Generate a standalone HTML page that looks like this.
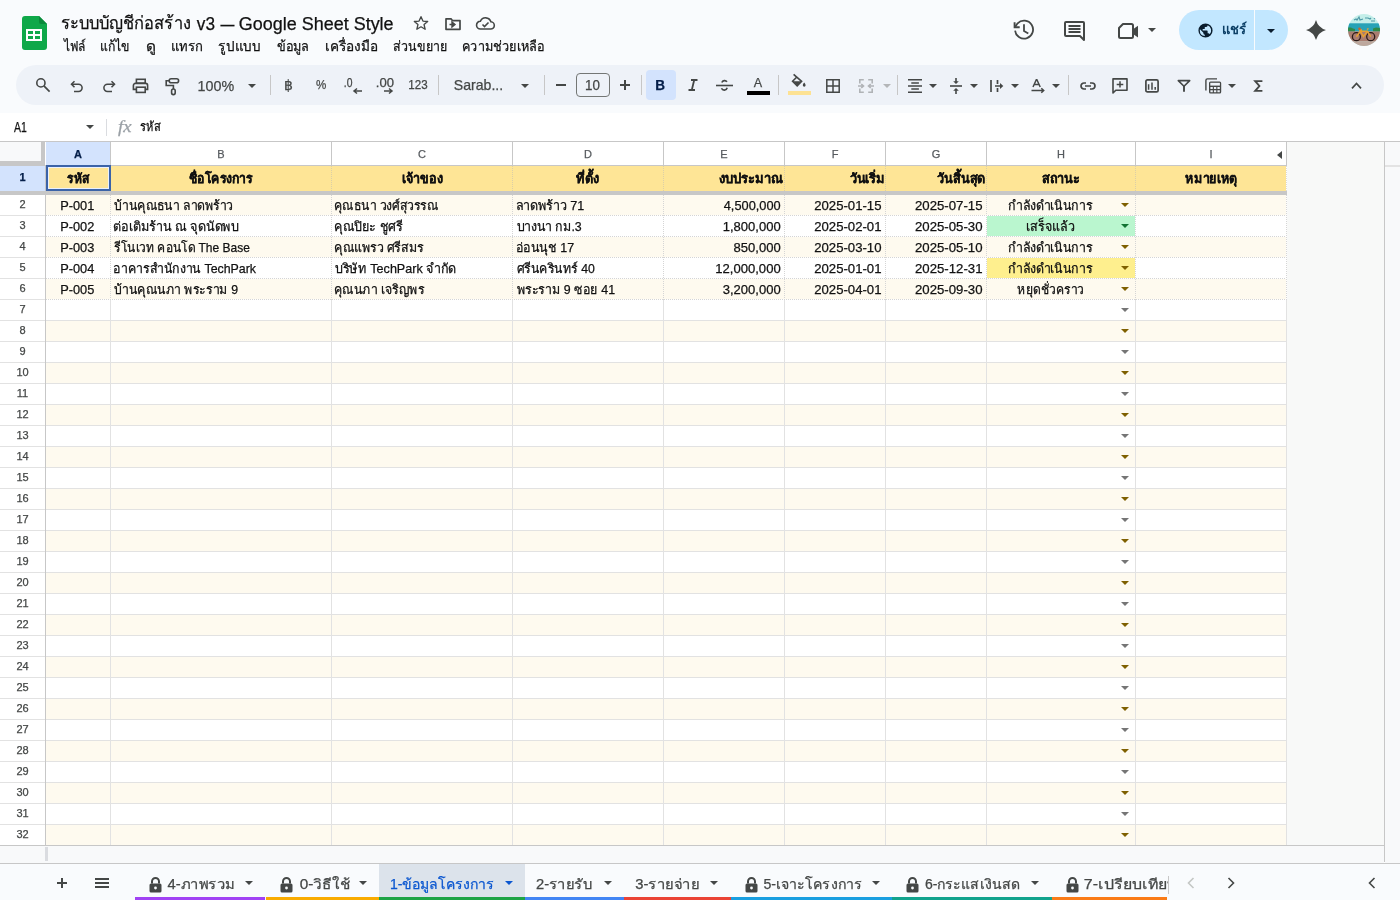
<!DOCTYPE html><html><head><meta charset="utf-8"><style>
*{box-sizing:border-box;margin:0;padding:0}
html,body{width:1400px;height:900px;overflow:hidden;background:#f9fbfd;font-family:"Liberation Sans", sans-serif;color:#111}
.a{position:absolute}
.t{position:absolute;white-space:nowrap;line-height:1;-webkit-text-stroke:0.25px currentColor}
#root{position:absolute;left:0;top:0;width:1400px;height:900px;will-change:transform}
svg{position:absolute;overflow:visible}
</style></head><body><div id="root"><svg style="left:22px;top:16px" width="25" height="34" viewBox="0 0 25 34"><path d="M3 0h14l8 8v23a3 3 0 0 1-3 3H3a3 3 0 0 1-3-3V3a3 3 0 0 1 3-3z" fill="#0fa849"/><path d="M17 0l8 8h-6a2 2 0 0 1-2-2z" fill="#0a8a3a"/><path d="M4 13h16v12H4z" fill="#fff"/><path d="M6 15h5v3H6zM13 15h5v3h-5zM6 20h5v3H6zM13 20h5v3h-5z" fill="#0fa849"/></svg><div class="t" style="left:61px;top:14px;font-size:18px;transform-origin:1.00px 50%;transform:translateX(-0.25px) scaleX(0.9161);" id="t1"><span>ระบบบัญชีก่อสร้าง</span></div><div class="t" style="left:196px;top:15px;font-size:18px;transform-origin:0.00px 50%;transform:translateX(0.80px) scaleX(0.9556);" id="t2"><span>v3</span></div><div class="t" style="left:220px;top:15px;font-size:18px;transform-origin:0.00px 50%;transform:translateX(0.50px) scaleX(0.7722);" id="t3"><span>—</span></div><div class="t" style="left:239px;top:15px;font-size:18px;transform-origin:1.00px 50%;transform:translateX(-0.20px) scaleX(0.9980);" id="t4"><span>Google Sheet Style</span></div><svg style="left:413px;top:15px" width="16" height="16" viewBox="0 0 24 24"><path d="M12 2.5l2.9 6.6 7.1.6-5.4 4.7 1.6 7-6.2-3.7-6.2 3.7 1.6-7L2 9.7l7.1-.6z" fill="none" stroke="#444746" stroke-width="2" stroke-linejoin="round"/></svg><svg style="left:445px;top:17px" width="16" height="14" viewBox="0 0 16 14"><path d="M1 2.2V12.3h14V3.6H7.4L6 1.8H1z" fill="none" stroke="#444746" stroke-width="1.7" stroke-linejoin="round"/><path d="M4.5 7.5h4M7 5l3 2.5L7 10z" fill="#444746" stroke="#444746" stroke-width="1.4"/></svg><svg style="left:476px;top:17px" width="19" height="13" viewBox="0 0 19 13"><path d="M4.5 12H14.5a3.6 3.6 0 0 0 .4-7.2A5.6 5.6 0 0 0 4.4 4.2 3.9 3.9 0 0 0 4.5 12z" fill="none" stroke="#444746" stroke-width="1.6"/><path d="M6.5 7.5l2 2 4-4" fill="none" stroke="#444746" stroke-width="1.6"/></svg><div class="t" style="left:62px;top:39px;font-size:14px;transform-origin:-1.00px 50%;transform:translateX(1.70px) scaleX(0.8538);" id="t5"><span>ไฟล์</span></div><div class="t" style="left:101px;top:39px;font-size:14px;transform-origin:1.00px 50%;transform:translateX(-0.70px) scaleX(0.8750);" id="t6"><span>แก้ไข</span></div><div class="t" style="left:146px;top:39px;font-size:14px;transform-origin:1.00px 50%;transform:translateX(-0.10px) scaleX(1.1000);" id="t7"><span>ดู</span></div><div class="t" style="left:171px;top:39px;font-size:14px;transform-origin:1.00px 50%;transform:translateX(-0.30px) scaleX(0.9333);" id="t8"><span>แทรก</span></div><div class="t" style="left:219px;top:39px;font-size:14px;transform-origin:1.00px 50%;transform:translateX(-0.70px) scaleX(0.9643);" id="t9"><span>รูปแบบ</span></div><div class="t" style="left:276px;top:39px;font-size:14px;transform-origin:0.00px 50%;transform:translateX(0.80px) scaleX(0.9086);" id="t10"><span>ข้อมูล</span></div><div class="t" style="left:326px;top:39px;font-size:14px;transform-origin:1.00px 50%;transform:translateX(-1.00px) scaleX(0.9731);" id="t11"><span>เครื่องมือ</span></div><div class="t" style="left:393px;top:39px;font-size:14px;transform-origin:1.00px 50%;transform:translateX(-0.30px) scaleX(0.8864);" id="t12"><span>ส่วนขยาย</span></div><div class="t" style="left:463px;top:39px;font-size:14px;transform-origin:1.00px 50%;transform:translateX(-0.80px) scaleX(0.9045);" id="t13"><span>ความช่วยเหลือ</span></div><svg style="left:1013px;top:19px" width="22" height="22" viewBox="0 0 22 22"><path d="M2.1 11.6A9 9 0 1 0 4.6 4.3L2.2 7.7" fill="none" stroke="#444746" stroke-width="1.8"/><path d="M1.6 3.2V8.3H6.7" fill="none" stroke="#444746" stroke-width="1.9"/><path d="M11 5.3V12l4.3 2.6" fill="none" stroke="#444746" stroke-width="1.8"/></svg><svg style="left:1064px;top:21px" width="21" height="20" viewBox="0 0 21 20"><path d="M2 1h17a1 1 0 0 1 1 1v13l0 4-4-4H2a1 1 0 0 1-1-1V2a1 1 0 0 1 1-1z" fill="none" stroke="#444746" stroke-width="2" stroke-linejoin="round"/><path d="M4.5 5h12M4.5 8h12M4.5 11h12" stroke="#444746" stroke-width="1.8"/></svg><svg style="left:1118px;top:23px" width="21" height="16" viewBox="0 0 21 16"><path d="M5 1h8.5a1.5 1.5 0 0 1 1.5 1.5v11a1.5 1.5 0 0 1-1.5 1.5H2.5A1.5 1.5 0 0 1 1 13.5V5z" fill="none" stroke="#444746" stroke-width="2" stroke-linejoin="round"/><path d="M15 6.3l5-3.6v11.8l-5-3.6z" fill="#444746"/></svg><svg style="left:1148px;top:28px" width="8" height="4" viewBox="0 0 8 4"><path d="M0 0h8L4 4z" fill="#444746"/></svg><div class="a" style="left:1179px;top:10px;width:109px;height:40px;border-radius:20px;background:#c2e7ff"></div><div class="a" style="left:1254px;top:10px;width:1px;height:40px;background:#f9fbfd"></div><svg style="left:1197px;top:22px" width="17" height="17" viewBox="0 0 24 24"><path d="M12 2a10 10 0 1 0 0 20 10 10 0 0 0 0-20zm-1 17.9A8 8 0 0 1 4 12c0-.6.1-1.2.2-1.8L9 15v1a2 2 0 0 0 2 2zm6.9-2.5A2 2 0 0 0 16 16h-1v-3a1 1 0 0 0-1-1H8v-2h2a1 1 0 0 0 1-1V7h2a2 2 0 0 0 2-2v-.4a8 8 0 0 1 2.9 12.8z" fill="#0a1d2e"/></svg><div class="t" style="left:1222px;top:22px;font-size:14px;font-weight:bold;color:#0b3f66;-webkit-text-stroke:0;transform-origin:1.00px 50%;transform:translateX(-0.40px) scaleX(0.9320);" id="t14"><span>แชร์</span></div><svg style="left:1267px;top:29px" width="8" height="4" viewBox="0 0 8 4"><path d="M0 0h8L4 4z" fill="#0a1d2e"/></svg><svg style="left:1306px;top:20px" width="20" height="20" viewBox="0 0 20 20"><path d="M10 0Q12.2 7.8 20 10Q12.2 12.2 10 20Q7.8 12.2 0 10Q7.8 7.8 10 0z" fill="#444746"/></svg><svg style="left:1348px;top:14px" width="32" height="32" viewBox="0 0 32 32"><defs><clipPath id="av"><circle cx="16" cy="16" r="16"/></clipPath></defs><g clip-path="url(#av)"><rect width="32" height="32" fill="#c4eee9"/><path d="M6 6l2-1 1 1 2-3 1 3 3-1M17 4h3l2 1 1-1M23 7h4M26 5l2-2" stroke="#4f9aa8" stroke-width="1.2" fill="none"/><rect y="9.3" width="32" height="8.2" fill="#27a2b6"/><path d="M0 13.5h3l2 1 2 0.5v2.5H0zM25 14.5l3-1 4 0.5v3.5h-7z" fill="#2f8a48"/><rect y="17.4" width="32" height="10" fill="#a97c70"/><rect y="27.2" width="32" height="5" fill="#bda79d"/><circle cx="8.4" cy="22.7" r="4" fill="none" stroke="#2a1a18" stroke-width="1.3"/><circle cx="22.7" cy="22.7" r="4" fill="none" stroke="#2a1a18" stroke-width="1.3"/><path d="M8.4 22.7l4-5.5h7l3.3 5.5M12.4 17.2l3 5.5 4-5.5M11 16h3M19 15.5l1.5-1" stroke="#e8a030" stroke-width="1.5" fill="none"/><circle cx="11.5" cy="14.8" r="1.3" fill="#d0602a"/></g></svg><div class="a" style="left:16px;top:65px;width:1368px;height:40px;border-radius:20px;background:#eef2f8"></div><svg style="left:36px;top:78px" width="15" height="15" viewBox="0 0 15 15"><circle cx="4.9" cy="4.9" r="4.1" fill="none" stroke="#444746" stroke-width="1.6"/><path d="M7.9 7.9l5.7 5.7" stroke="#444746" stroke-width="1.7"/></svg><svg style="left:70px;top:80px" width="14" height="13" viewBox="0 0 14 13"><path d="M4.5 1.2L1.5 4.2l3 3" fill="none" stroke="#444746" stroke-width="1.55"/><path d="M1.7 4.2h6.8a3.6 3.6 0 0 1 0 7.2H4" fill="none" stroke="#444746" stroke-width="1.55"/></svg><svg style="left:102px;top:80px" width="14" height="13" viewBox="0 0 14 13"><path d="M9.5 1.2l3 3-3 3" fill="none" stroke="#444746" stroke-width="1.55"/><path d="M12.3 4.2H5.5a3.6 3.6 0 0 0 0 7.2H10" fill="none" stroke="#444746" stroke-width="1.55"/></svg><svg style="left:132px;top:78px" width="17" height="15" viewBox="0 0 17 15"><rect x="4.4" y="1.3" width="8.8" height="3.9" fill="none" stroke="#444746" stroke-width="1.6"/><path d="M4.4 11.4H1.4V7.4a2 2 0 0 1 2-2h10.2a2 2 0 0 1 2 2V11.4h-2.4" fill="none" stroke="#444746" stroke-width="1.6"/><rect x="4.4" y="9.2" width="8.8" height="5.2" fill="none" stroke="#444746" stroke-width="1.6"/></svg><svg style="left:164px;top:78px" width="16" height="17" viewBox="0 0 16 17"><rect x="5.2" y="0.8" width="9.4" height="4" rx="2" fill="none" stroke="#444746" stroke-width="1.6"/><path d="M5.2 2.8H2.2V7.5H9.4V11" fill="none" stroke="#444746" stroke-width="1.6"/><rect x="7.6" y="11" width="3.6" height="5.6" rx="1.8" fill="none" stroke="#444746" stroke-width="1.6"/></svg><div class="t" style="left:198px;top:79px;font-size:14.5px;color:#444746;transform-origin:1.00px 50%;transform:translateX(-0.40px) scaleX(0.9861);" id="t15"><span>100%</span></div><svg style="left:248px;top:84px" width="8" height="4" viewBox="0 0 8 4"><path d="M0 0h8L4 4z" fill="#444746"/></svg><div class="a" style="left:270px;top:75px;width:1px;height:20px;background:#c7c7c7"></div><div class="t" style="left:284px;top:78px;font-size:14px;color:#444746;" id="t16"><span>฿</span></div><div class="t" style="left:315px;top:78px;font-size:13.5px;color:#444746;transform-origin:0.00px 50%;transform:translateX(0.90px) scaleX(0.8583);" id="t17"><span>%</span></div><div class="t" style="left:344px;top:77px;font-size:12px;color:#444746;transform-origin:1.00px 50%;transform:translateX(-0.30px) scaleX(0.8636);" id="t18"><span>.0</span></div><svg style="left:353px;top:88px" width="9" height="6" viewBox="0 0 9 6"><path d="M9 3H2M4 .5L1 3l3 2.5" fill="none" stroke="#444746" stroke-width="1.5"/></svg><div class="t" style="left:376px;top:77px;font-size:12px;color:#444746;transform-origin:1.00px 50%;transform:translateX(-0.10px) scaleX(1.0867);" id="t19"><span>.00</span></div><svg style="left:384px;top:88px" width="9" height="6" viewBox="0 0 9 6"><path d="M0 3h7M5 .5L8 3 5 5.5" fill="none" stroke="#444746" stroke-width="1.5"/></svg><div class="t" style="left:409px;top:79px;font-size:12px;color:#444746;transform-origin:1.00px 50%;transform:translateX(-0.80px) scaleX(0.9667);" id="t20"><span>123</span></div><div class="a" style="left:438px;top:75px;width:1px;height:20px;background:#c7c7c7"></div><div class="t" style="left:454px;top:78px;font-size:14.5px;color:#444746;transform-origin:1.00px 50%;transform:translateX(-0.20px) scaleX(0.9714);" id="t21"><span>Sarab...</span></div><svg style="left:521px;top:84px" width="8" height="4" viewBox="0 0 8 4"><path d="M0 0h8L4 4z" fill="#444746"/></svg><div class="a" style="left:544px;top:75px;width:1px;height:20px;background:#c7c7c7"></div><div class="a" style="left:556px;top:84px;width:10px;height:2px;background:#444746"></div><div class="a" style="left:576px;top:73px;width:34px;height:24px;border:1px solid #747775;border-radius:4px"></div><div class="t" style="left:586px;top:78px;font-size:14px;color:#444746;transform-origin:1.00px 50%;transform:translateX(-1.00px) scaleX(0.9571);" id="t22"><span>10</span></div><div class="a" style="left:620px;top:84px;width:10px;height:2px;background:#444746"></div><div class="a" style="left:624px;top:80px;width:2px;height:10px;background:#444746"></div><div class="a" style="left:641px;top:75px;width:1px;height:20px;background:#c7c7c7"></div><div class="a" style="left:646px;top:70px;width:30px;height:30px;border-radius:4px;background:#d3e3fd"></div><div class="t" style="left:655px;top:78px;font-size:14px;font-weight:bold;color:#041e49;transform-origin:1.00px 50%;transform:translateX(0.30px) scaleX(0.9667);" id="t23"><span>B</span></div><svg style="left:688px;top:79px" width="10" height="12" viewBox="0 0 10 12"><path d="M3 1h6.5M.5 11H7M6.2 1L3.8 11" fill="none" stroke="#444746" stroke-width="1.8"/></svg><svg style="left:716px;top:78px" width="17" height="14" viewBox="0 0 17 14"><path d="M0 7.5h17" stroke="#444746" stroke-width="1.6"/><path d="M11 3.8A3 3 0 0 0 5.8 4.5M5.5 10.2A3 3 0 0 0 11.2 9.8" fill="none" stroke="#444746" stroke-width="1.6"/></svg><div class="t" style="left:753px;top:76px;font-size:13px;color:#444746;transform-origin:0.00px 50%;transform:translateX(0.70px) scaleX(0.9667);" id="t24"><span>A</span></div><div class="a" style="left:747px;top:91px;width:23px;height:4px;background:#000"></div><div class="a" style="left:778px;top:75px;width:1px;height:20px;background:#c7c7c7"></div><svg style="left:791px;top:74px" width="16" height="14" viewBox="0 0 16 14"><path d="M2.6 0.4L10.6 7.4 6.2 11.8 1.6 7.2 5.6 3.2" fill="none" stroke="#444746" stroke-width="1.6"/><path d="M1.8 7.2h8.6L6.2 11.4z" fill="#444746"/><path d="M13.2 8.5c-.9 1.3-1.4 2-1.4 2.8a1.4 1.4 0 0 0 2.8 0c0-.8-.5-1.5-1.4-2.8z" fill="#444746"/></svg><div class="a" style="left:788px;top:91px;width:23px;height:4px;background:#fde293"></div><svg style="left:826px;top:79px" width="14" height="14" viewBox="0 0 14 14"><path d="M0.8 0.8h12.4v12.4H0.8zM7 0.8v12.4M0.8 7h12.4" fill="none" stroke="#444746" stroke-width="1.5"/></svg><svg style="left:858px;top:79px" width="16" height="14" viewBox="0 0 16 14"><path d="M5.8 0.8H1.8V4.6M1.8 9.4V13.2H5.8M10.2 0.8H14.2V4.6M14.2 9.4V13.2H10.2M0 7H5M3.3 5L5.5 7 3.3 9M16 7H11M12.7 5L10.5 7 12.7 9" fill="none" stroke="#b0b3b6" stroke-width="1.6"/></svg><svg style="left:883px;top:84px" width="8" height="4" viewBox="0 0 8 4"><path d="M0 0h8L4 4z" fill="#b4b6b8"/></svg><div class="a" style="left:897px;top:75px;width:1px;height:20px;background:#c7c7c7"></div><svg style="left:908px;top:79px" width="14" height="14" viewBox="0 0 14 14"><path d="M0 0.8h14M3.3 3.9h7.6M0 7h14M3.3 10.1h7.6M0 13.2h14" stroke="#444746" stroke-width="1.5"/></svg><svg style="left:929px;top:84px" width="8" height="4" viewBox="0 0 8 4"><path d="M0 0h8L4 4z" fill="#444746"/></svg><svg style="left:950px;top:78px" width="12" height="16" viewBox="0 0 12 16"><path d="M0 8h12" stroke="#444746" stroke-width="1.6"/><path d="M6 0v5M6 16v-5" stroke="#444746" stroke-width="1.6"/><path d="M3.2 3.2L6 6 8.8 3.2zM3.2 12.8L6 10 8.8 12.8z" fill="#444746"/></svg><svg style="left:970px;top:84px" width="8" height="4" viewBox="0 0 8 4"><path d="M0 0h8L4 4z" fill="#444746"/></svg><svg style="left:990px;top:79px" width="14" height="14" viewBox="0 0 14 14"><path d="M1 1v12M7.5 1v4M7.5 9v4M5 7h6" fill="none" stroke="#444746" stroke-width="1.7"/><path d="M10 4l3.3 3L10 10z" fill="#444746"/></svg><svg style="left:1011px;top:84px" width="8" height="4" viewBox="0 0 8 4"><path d="M0 0h8L4 4z" fill="#444746"/></svg><svg style="left:1031px;top:79px" width="14" height="15" viewBox="0 0 14 15"><path d="M2 8L5.3 0.8h.6L9.2 8M3.2 5.5h4.8M0.5 11.5H12.5M10.3 9.3l2.4 2.2-2.4 2.2" fill="none" stroke="#444746" stroke-width="1.5"/></svg><svg style="left:1052px;top:84px" width="8" height="4" viewBox="0 0 8 4"><path d="M0 0h8L4 4z" fill="#444746"/></svg><div class="a" style="left:1068px;top:75px;width:1px;height:20px;background:#c7c7c7"></div><svg style="left:1080px;top:82px" width="16" height="8" viewBox="0 0 16 8"><path d="M6 1H4a3 3 0 0 0 0 6h2M10 1h2a3 3 0 0 1 0 6h-2M5 4h6" fill="none" stroke="#444746" stroke-width="1.7"/></svg><svg style="left:1112px;top:78px" width="16" height="16" viewBox="0 0 16 16"><path d="M1 0.9h14v11.3H3.8L1 15z" fill="none" stroke="#444746" stroke-width="1.6" stroke-linejoin="round"/><path d="M8 3.2v6.3M4.7 6.4h6.6" stroke="#444746" stroke-width="1.5"/></svg><svg style="left:1145px;top:79px" width="14" height="14" viewBox="0 0 14 14"><rect x="0.9" y="0.9" width="12.2" height="12" rx="1.5" fill="none" stroke="#444746" stroke-width="1.7"/><path d="M3.6 10.7V5.3M7 10.7V3.4M10.2 10.7V8" stroke="#444746" stroke-width="1.5"/></svg><svg style="left:1177px;top:79px" width="14" height="14" viewBox="0 0 14 14"><path d="M1.3 1.6h11.4L7 7.3z" fill="none" stroke="#444746" stroke-width="1.6" stroke-linejoin="round"/><path d="M7 7v5.8" stroke="#444746" stroke-width="1.9"/></svg><svg style="left:1205px;top:78px" width="17" height="16" viewBox="0 0 17 16"><path d="M0.9 12.5V2.4A1.5 1.5 0 0 1 2.4 0.9H12" fill="none" stroke="#444746" stroke-width="1.4"/><rect x="4" y="3.5" width="12.2" height="12" rx="1.6" fill="#444746"/><rect x="5.3" y="4.8" width="9.6" height="2.8" fill="#eef2f8"/><path d="M5.4 9h2.4v2H5.4zM8.9 9h2.4v2H8.9zM12.4 9h2.4v2h-2.4zM5.4 12.3h2.4v2H5.4zM8.9 12.3h2.4v2H8.9zM12.4 12.3h2.4v2h-2.4z" fill="#eef2f8"/></svg><svg style="left:1228px;top:84px" width="8" height="4" viewBox="0 0 8 4"><path d="M0 0h8L4 4z" fill="#444746"/></svg><svg style="left:1254px;top:80px" width="10" height="12" viewBox="0 0 10 12"><path d="M8.4 1.1H1.2L5.4 6 1.2 10.9h7.2" fill="none" stroke="#444746" stroke-width="1.9" stroke-linejoin="miter"/></svg><svg style="left:1351px;top:82px" width="11" height="7" viewBox="0 0 11 7"><path d="M1 6.3L5.5 1.5 10 6.3" fill="none" stroke="#444746" stroke-width="1.7"/></svg><div class="a" style="left:0;top:113px;width:1400px;height:28px;background:#fff"></div><div class="t" style="left:14px;top:120px;font-size:14px;transform-origin:0.00px 50%;transform:translateX(0.00px) scaleX(0.7471);" id="t25"><span>A1</span></div><svg style="left:86px;top:125px" width="8" height="4" viewBox="0 0 8 4"><path d="M0 0h8L4 4z" fill="#444746"/></svg><div class="a" style="left:106px;top:119px;width:1px;height:17px;background:#dadce0"></div><div class="t" style="left:118px;top:119px;font-size:16px;font-family:'Liberation Serif',serif;font-style:italic;color:#9aa0a6;transform-origin:0.00px 50%;transform:translateX(0.00px) scaleX(1.1667);" id="t26"><span>fx</span></div><div class="t" style="left:141px;top:120px;font-size:13px;transform-origin:1.00px 50%;transform:translateX(-0.70px) scaleX(0.8565);" id="t27"><span>รหัส</span></div><div class="a" style="left:0;top:141px;width:1400px;height:722px;background:#fff"></div><div class="a" style="left:1287px;top:141px;width:97px;height:705px;background:#f8f9f8"></div><div class="a" style="left:1385px;top:141px;width:15px;height:722px;background:#f8f9fa"></div><div class="a" style="left:1385px;top:165px;width:15px;height:2px;background:#e3e3e3"></div><div class="a" style="left:1384px;top:141px;width:1px;height:721px;background:#c7c7c7"></div><div class="a" style="left:0;top:846px;width:1384px;height:17px;background:#f8f9fa"></div><div class="a" style="left:45px;top:847px;width:3px;height:14px;background:#dadce0"></div><div class="a" style="left:0;top:863px;width:1400px;height:1px;background:#c7c7c7"></div><div class="a" style="left:0;top:141px;width:1400px;height:1px;background:#c7c7c7"></div><div class="a" style="left:0;top:142px;width:41px;height:19px;background:#f8f9fa"></div><div class="a" style="left:41px;top:142px;width:4px;height:23px;background:#c7c7c7"></div><div class="a" style="left:0;top:161px;width:45px;height:4px;background:#c7c7c7"></div><div class="a" style="left:46px;top:142px;width:64px;height:23px;background:#d3e3fd"></div><div class="a" style="left:110px;top:142px;width:1px;height:23px;background:#c7c7c7"></div><div class="t" style="left:46px;top:149px;font-size:11px;width:64px;text-align:center;font-weight:bold;color:#041e49;" id="t28"><span>A</span></div><div class="a" style="left:111px;top:142px;width:220px;height:23px;background:#fff"></div><div class="a" style="left:331px;top:142px;width:1px;height:23px;background:#c7c7c7"></div><div class="t" style="left:111px;top:149px;font-size:11px;width:220px;text-align:center;color:#575b5f;" id="t29"><span>B</span></div><div class="a" style="left:332px;top:142px;width:180px;height:23px;background:#fff"></div><div class="a" style="left:512px;top:142px;width:1px;height:23px;background:#c7c7c7"></div><div class="t" style="left:332px;top:149px;font-size:11px;width:180px;text-align:center;color:#575b5f;" id="t30"><span>C</span></div><div class="a" style="left:513px;top:142px;width:150px;height:23px;background:#fff"></div><div class="a" style="left:663px;top:142px;width:1px;height:23px;background:#c7c7c7"></div><div class="t" style="left:513px;top:149px;font-size:11px;width:150px;text-align:center;color:#575b5f;" id="t31"><span>D</span></div><div class="a" style="left:664px;top:142px;width:120px;height:23px;background:#fff"></div><div class="a" style="left:784px;top:142px;width:1px;height:23px;background:#c7c7c7"></div><div class="t" style="left:664px;top:149px;font-size:11px;width:120px;text-align:center;color:#575b5f;" id="t32"><span>E</span></div><div class="a" style="left:785px;top:142px;width:100px;height:23px;background:#fff"></div><div class="a" style="left:885px;top:142px;width:1px;height:23px;background:#c7c7c7"></div><div class="t" style="left:785px;top:149px;font-size:11px;width:100px;text-align:center;color:#575b5f;" id="t33"><span>F</span></div><div class="a" style="left:886px;top:142px;width:100px;height:23px;background:#fff"></div><div class="a" style="left:986px;top:142px;width:1px;height:23px;background:#c7c7c7"></div><div class="t" style="left:886px;top:149px;font-size:11px;width:100px;text-align:center;color:#575b5f;" id="t34"><span>G</span></div><div class="a" style="left:987px;top:142px;width:148px;height:23px;background:#fff"></div><div class="a" style="left:1135px;top:142px;width:1px;height:23px;background:#c7c7c7"></div><div class="t" style="left:987px;top:149px;font-size:11px;width:148px;text-align:center;color:#575b5f;" id="t35"><span>H</span></div><div class="a" style="left:1136px;top:142px;width:150px;height:23px;background:#fff"></div><div class="a" style="left:1286px;top:142px;width:1px;height:23px;background:#c7c7c7"></div><div class="t" style="left:1136px;top:149px;font-size:11px;width:150px;text-align:center;color:#575b5f;" id="t36"><span>I</span></div><svg style="left:1277px;top:151px" width="5" height="8" viewBox="0 0 5 8"><path d="M5 0v8L0 4z" fill="#444746"/></svg><div class="a" style="left:0;top:165px;width:1287px;height:1px;background:#c7c7c7"></div><div class="a" style="left:0;top:166px;width:45px;height:25px;background:#d3e3fd"></div><div class="t" style="left:0px;top:172px;font-size:11px;width:45px;text-align:center;font-weight:bold;color:#041e49;" id="t37"><span>1</span></div><div class="a" style="left:46px;top:166px;width:1240px;height:25px;background:#fee596"></div><div class="a" style="left:0;top:191px;width:1287px;height:4px;background:#c7c7c7"></div><div class="t" style="left:46px;top:172px;font-size:13px;width:64px;text-align:center;font-weight:bold;transform-origin:20.00px 50%;transform:translateX(1.00px) scaleX(0.9292);" id="t38"><span>รหัส</span></div><div class="t" style="left:111px;top:172px;font-size:13px;width:220px;text-align:center;font-weight:bold;transform-origin:76.00px 50%;transform:translateX(1.60px) scaleX(0.9412);" id="t39"><span>ชื่อโครงการ</span></div><div class="t" style="left:332px;top:172px;font-size:13px;width:180px;text-align:center;font-weight:bold;transform-origin:69.00px 50%;transform:translateX(0.80px) scaleX(0.9643);" id="t40"><span>เจ้าของ</span></div><div class="t" style="left:513px;top:172px;font-size:13px;width:150px;text-align:center;font-weight:bold;transform-origin:64.00px 50%;transform:translateX(-0.50px) scaleX(0.9739);" id="t41"><span>ที่ตั้ง</span></div><div class="t" style="left:664px;top:172px;font-size:13px;width:119px;text-align:right;font-weight:bold;transform-origin:55.00px 50%;transform:translateX(0.30px) scaleX(0.9938);" id="t42"><span>งบประมาณ</span></div><div class="t" style="left:785px;top:172px;font-size:13px;width:99px;text-align:right;font-weight:bold;transform-origin:63.00px 50%;transform:translateX(1.80px) scaleX(0.9771);" id="t43"><span>วันเริ่ม</span></div><div class="t" style="left:886px;top:172px;font-size:13px;width:99px;text-align:right;font-weight:bold;transform-origin:50.00px 50%;transform:translateX(1.50px) scaleX(0.9755);" id="t44"><span>วันสิ้นสุด</span></div><div class="t" style="left:987px;top:172px;font-size:13px;width:148px;text-align:center;font-weight:bold;transform-origin:55.00px 50%;transform:translateX(0.30px) scaleX(0.9789);" id="t45"><span>สถานะ</span></div><div class="t" style="left:1136px;top:172px;font-size:13px;width:150px;text-align:center;font-weight:bold;transform-origin:48.00px 50%;transform:translateX(1.40px) scaleX(0.9556);" id="t46"><span>หมายเหตุ</span></div><div class="a" style="left:46px;top:195px;width:1240px;height:20px;background:#fefaef"></div><div class="t" style="left:0px;top:199px;font-size:11px;width:45px;text-align:center;color:#444746;" id="t47"><span>2</span></div><div class="a" style="left:46px;top:215px;width:1240px;height:1px;background:repeating-linear-gradient(90deg,#d5d5d5 0 1px,transparent 1px 2px)"></div><div class="a" style="left:0;top:215px;width:45px;height:1px;background:#e2e2e2"></div><svg style="left:1121px;top:203px" width="8" height="4" viewBox="0 0 8 4"><path d="M0 0h8L4 4z" fill="#7f6000"/></svg><div class="t" style="left:46px;top:199px;font-size:13px;width:64px;text-align:center;transform-origin:16.00px 50%;transform:translateX(-0.50px) scaleX(0.9848);" id="t48"><span>P-001</span></div><div class="t" style="left:114px;top:199px;font-size:13px;transform-origin:0.00px 50%;transform:translateX(0.40px) scaleX(0.9444);" id="t49"><span>บ้านคุณธนา ลาดพร้าว</span></div><div class="t" style="left:335px;top:199px;font-size:13px;transform-origin:1.00px 50%;transform:translateX(-1.10px) scaleX(0.9418);" id="t50"><span>คุณธนา วงศ์สุวรรณ</span></div><div class="t" style="left:516px;top:199px;font-size:13px;transform-origin:1.00px 50%;transform:translateX(-0.50px) scaleX(0.9671);" id="t51"><span>ลาดพร้าว 71</span></div><div class="t" style="left:664px;top:199px;font-size:13px;width:117px;text-align:right;transform-origin:59.00px 50%;transform:translateX(0.60px) scaleX(0.9845);" id="t52"><span>4,500,000</span></div><div class="t" style="left:785px;top:199px;font-size:13px;width:97px;text-align:right;transform-origin:31.00px 50%;transform:translateX(-1.30px) scaleX(1.0121);" id="t53"><span>2025-01-15</span></div><div class="t" style="left:886px;top:199px;font-size:13px;width:97px;text-align:right;transform-origin:31.00px 50%;transform:translateX(-1.50px) scaleX(1.0152);" id="t54"><span>2025-07-15</span></div><div class="t" style="left:987px;top:199px;font-size:13px;width:130px;text-align:center;transform-origin:22.00px 50%;transform:translateX(0.30px) scaleX(0.9563);" id="t55"><span>กำลังดำเนินการ</span></div><div class="a" style="left:46px;top:216px;width:1240px;height:20px;background:#fff"></div><div class="a" style="left:987px;top:216px;width:148px;height:20px;background:#baf6cf"></div><div class="t" style="left:0px;top:220px;font-size:11px;width:45px;text-align:center;color:#444746;" id="t56"><span>3</span></div><div class="a" style="left:46px;top:236px;width:1240px;height:1px;background:repeating-linear-gradient(90deg,#d5d5d5 0 1px,transparent 1px 2px)"></div><div class="a" style="left:0;top:236px;width:45px;height:1px;background:#e2e2e2"></div><svg style="left:1121px;top:224px" width="8" height="4" viewBox="0 0 8 4"><path d="M0 0h8L4 4z" fill="#137333"/></svg><div class="t" style="left:46px;top:220px;font-size:13px;width:64px;text-align:center;transform-origin:16.00px 50%;transform:translateX(-0.50px) scaleX(0.9848);" id="t57"><span>P-002</span></div><div class="t" style="left:114px;top:220px;font-size:13px;transform-origin:1.00px 50%;transform:translateX(-0.60px) scaleX(0.9703);" id="t58"><span>ต่อเติมร้าน ณ จุดนัดพบ</span></div><div class="t" style="left:335px;top:220px;font-size:13px;transform-origin:1.00px 50%;transform:translateX(-1.10px) scaleX(0.9577);" id="t59"><span>คุณปิยะ ชูศรี</span></div><div class="t" style="left:516px;top:220px;font-size:13px;transform-origin:0.00px 50%;transform:translateX(0.50px) scaleX(0.9529);" id="t60"><span>บางนา กม.3</span></div><div class="t" style="left:664px;top:220px;font-size:13px;width:117px;text-align:right;transform-origin:60.00px 50%;transform:translateX(-0.40px) scaleX(1.0018);" id="t61"><span>1,800,000</span></div><div class="t" style="left:785px;top:220px;font-size:13px;width:97px;text-align:right;transform-origin:31.00px 50%;transform:translateX(-1.30px) scaleX(1.0121);" id="t62"><span>2025-02-01</span></div><div class="t" style="left:886px;top:220px;font-size:13px;width:97px;text-align:right;transform-origin:31.00px 50%;transform:translateX(-1.50px) scaleX(1.0152);" id="t63"><span>2025-05-30</span></div><div class="t" style="left:987px;top:220px;font-size:13px;width:130px;text-align:center;transform-origin:41.00px 50%;transform:translateX(-0.80px) scaleX(0.9612);" id="t64"><span>เสร็จแล้ว</span></div><div class="a" style="left:46px;top:237px;width:1240px;height:20px;background:#fefaef"></div><div class="t" style="left:0px;top:241px;font-size:11px;width:45px;text-align:center;color:#444746;" id="t65"><span>4</span></div><div class="a" style="left:46px;top:257px;width:1240px;height:1px;background:repeating-linear-gradient(90deg,#d5d5d5 0 1px,transparent 1px 2px)"></div><div class="a" style="left:0;top:257px;width:45px;height:1px;background:#e2e2e2"></div><svg style="left:1121px;top:245px" width="8" height="4" viewBox="0 0 8 4"><path d="M0 0h8L4 4z" fill="#7f6000"/></svg><div class="t" style="left:46px;top:241px;font-size:13px;width:64px;text-align:center;transform-origin:16.00px 50%;transform:translateX(-0.50px) scaleX(0.9848);" id="t66"><span>P-003</span></div><div class="t" style="left:114px;top:241px;font-size:13px;transform-origin:0.00px 50%;transform:translateX(0.40px) scaleX(0.9224);" id="t67"><span>รีโนเวท คอนโด The Base</span></div><div class="t" style="left:335px;top:241px;font-size:13px;transform-origin:1.00px 50%;transform:translateX(-1.10px) scaleX(0.9500);" id="t68"><span>คุณแพรว ศรีสมร</span></div><div class="t" style="left:516px;top:241px;font-size:13px;transform-origin:1.00px 50%;transform:translateX(-0.50px) scaleX(0.9583);" id="t69"><span>อ่อนนุช 17</span></div><div class="t" style="left:664px;top:241px;font-size:13px;width:117px;text-align:right;transform-origin:70.00px 50%;transform:translateX(-0.40px) scaleX(1.0021);" id="t70"><span>850,000</span></div><div class="t" style="left:785px;top:241px;font-size:13px;width:97px;text-align:right;transform-origin:31.00px 50%;transform:translateX(-1.30px) scaleX(1.0121);" id="t71"><span>2025-03-10</span></div><div class="t" style="left:886px;top:241px;font-size:13px;width:97px;text-align:right;transform-origin:31.00px 50%;transform:translateX(-1.50px) scaleX(1.0152);" id="t72"><span>2025-05-10</span></div><div class="t" style="left:987px;top:241px;font-size:13px;width:130px;text-align:center;transform-origin:22.00px 50%;transform:translateX(0.30px) scaleX(0.9563);" id="t73"><span>กำลังดำเนินการ</span></div><div class="a" style="left:46px;top:258px;width:1240px;height:20px;background:#fff"></div><div class="a" style="left:987px;top:258px;width:148px;height:20px;background:#feef8e"></div><div class="t" style="left:0px;top:262px;font-size:11px;width:45px;text-align:center;color:#444746;" id="t74"><span>5</span></div><div class="a" style="left:46px;top:278px;width:1240px;height:1px;background:repeating-linear-gradient(90deg,#d5d5d5 0 1px,transparent 1px 2px)"></div><div class="a" style="left:0;top:278px;width:45px;height:1px;background:#e2e2e2"></div><svg style="left:1121px;top:266px" width="8" height="4" viewBox="0 0 8 4"><path d="M0 0h8L4 4z" fill="#7f6000"/></svg><div class="t" style="left:46px;top:262px;font-size:13px;width:64px;text-align:center;transform-origin:16.00px 50%;transform:translateX(-0.50px) scaleX(0.9848);" id="t75"><span>P-004</span></div><div class="t" style="left:114px;top:262px;font-size:13px;transform-origin:1.00px 50%;transform:translateX(-0.60px) scaleX(0.9517);" id="t76"><span>อาคารสำนักงาน TechPark</span></div><div class="t" style="left:335px;top:262px;font-size:13px;transform-origin:0.00px 50%;transform:translateX(-0.10px) scaleX(0.9672);" id="t77"><span>บริษัท TechPark จำกัด</span></div><div class="t" style="left:516px;top:262px;font-size:13px;transform-origin:0.00px 50%;transform:translateX(0.50px) scaleX(0.9422);" id="t78"><span>ศรีนครินทร์ 40</span></div><div class="t" style="left:664px;top:262px;font-size:13px;width:117px;text-align:right;transform-origin:53.00px 50%;transform:translateX(-0.70px) scaleX(1.0063);" id="t79"><span>12,000,000</span></div><div class="t" style="left:785px;top:262px;font-size:13px;width:97px;text-align:right;transform-origin:31.00px 50%;transform:translateX(-1.30px) scaleX(1.0121);" id="t80"><span>2025-01-01</span></div><div class="t" style="left:886px;top:262px;font-size:13px;width:97px;text-align:right;transform-origin:31.00px 50%;transform:translateX(-1.50px) scaleX(1.0152);" id="t81"><span>2025-12-31</span></div><div class="t" style="left:987px;top:262px;font-size:13px;width:130px;text-align:center;transform-origin:22.00px 50%;transform:translateX(0.30px) scaleX(0.9563);" id="t82"><span>กำลังดำเนินการ</span></div><div class="a" style="left:46px;top:279px;width:1240px;height:20px;background:#fefaef"></div><div class="t" style="left:0px;top:283px;font-size:11px;width:45px;text-align:center;color:#444746;" id="t83"><span>6</span></div><div class="a" style="left:46px;top:299px;width:1240px;height:1px;background:repeating-linear-gradient(90deg,#d5d5d5 0 1px,transparent 1px 2px)"></div><div class="a" style="left:0;top:299px;width:45px;height:1px;background:#e2e2e2"></div><svg style="left:1121px;top:287px" width="8" height="4" viewBox="0 0 8 4"><path d="M0 0h8L4 4z" fill="#7f6000"/></svg><div class="t" style="left:46px;top:283px;font-size:13px;width:64px;text-align:center;transform-origin:16.00px 50%;transform:translateX(-0.50px) scaleX(0.9848);" id="t84"><span>P-005</span></div><div class="t" style="left:114px;top:283px;font-size:13px;transform-origin:0.00px 50%;transform:translateX(0.40px) scaleX(0.9477);" id="t85"><span>บ้านคุณนภา พระราม 9</span></div><div class="t" style="left:335px;top:283px;font-size:13px;transform-origin:1.00px 50%;transform:translateX(-1.10px) scaleX(0.9453);" id="t86"><span>คุณนภา เจริญพร</span></div><div class="t" style="left:516px;top:283px;font-size:13px;transform-origin:0.00px 50%;transform:translateX(0.50px) scaleX(0.9524);" id="t87"><span>พระราม 9 ซอย 41</span></div><div class="t" style="left:664px;top:283px;font-size:13px;width:117px;text-align:right;transform-origin:60.00px 50%;transform:translateX(-0.40px) scaleX(1.0018);" id="t88"><span>3,200,000</span></div><div class="t" style="left:785px;top:283px;font-size:13px;width:97px;text-align:right;transform-origin:31.00px 50%;transform:translateX(-1.30px) scaleX(1.0121);" id="t89"><span>2025-04-01</span></div><div class="t" style="left:886px;top:283px;font-size:13px;width:97px;text-align:right;transform-origin:31.00px 50%;transform:translateX(-1.50px) scaleX(1.0152);" id="t90"><span>2025-09-30</span></div><div class="t" style="left:987px;top:283px;font-size:13px;width:130px;text-align:center;transform-origin:30.00px 50%;transform:translateX(0.90px) scaleX(0.9310);" id="t91"><span>หยุดชั่วคราว</span></div><div class="a" style="left:46px;top:300px;width:1240px;height:20px;background:#fff"></div><div class="t" style="left:0px;top:304px;font-size:11px;width:45px;text-align:center;color:#444746;" id="t92"><span>7</span></div><div class="a" style="left:0;top:320px;width:1286px;height:1px;background:#e2e2e2"></div><svg style="left:1121px;top:308px" width="8" height="4" viewBox="0 0 8 4"><path d="M0 0h8L4 4z" fill="#757575"/></svg><div class="a" style="left:46px;top:321px;width:1240px;height:20px;background:#fefaef"></div><div class="t" style="left:0px;top:325px;font-size:11px;width:45px;text-align:center;color:#444746;" id="t93"><span>8</span></div><div class="a" style="left:0;top:341px;width:1286px;height:1px;background:#e2e2e2"></div><svg style="left:1121px;top:329px" width="8" height="4" viewBox="0 0 8 4"><path d="M0 0h8L4 4z" fill="#7f6000"/></svg><div class="a" style="left:46px;top:342px;width:1240px;height:20px;background:#fff"></div><div class="t" style="left:0px;top:346px;font-size:11px;width:45px;text-align:center;color:#444746;" id="t94"><span>9</span></div><div class="a" style="left:0;top:362px;width:1286px;height:1px;background:#e2e2e2"></div><svg style="left:1121px;top:350px" width="8" height="4" viewBox="0 0 8 4"><path d="M0 0h8L4 4z" fill="#757575"/></svg><div class="a" style="left:46px;top:363px;width:1240px;height:20px;background:#fefaef"></div><div class="t" style="left:0px;top:367px;font-size:11px;width:45px;text-align:center;color:#444746;" id="t95"><span>10</span></div><div class="a" style="left:0;top:383px;width:1286px;height:1px;background:#e2e2e2"></div><svg style="left:1121px;top:371px" width="8" height="4" viewBox="0 0 8 4"><path d="M0 0h8L4 4z" fill="#7f6000"/></svg><div class="a" style="left:46px;top:384px;width:1240px;height:20px;background:#fff"></div><div class="t" style="left:0px;top:388px;font-size:11px;width:45px;text-align:center;color:#444746;" id="t96"><span>11</span></div><div class="a" style="left:0;top:404px;width:1286px;height:1px;background:#e2e2e2"></div><svg style="left:1121px;top:392px" width="8" height="4" viewBox="0 0 8 4"><path d="M0 0h8L4 4z" fill="#757575"/></svg><div class="a" style="left:46px;top:405px;width:1240px;height:20px;background:#fefaef"></div><div class="t" style="left:0px;top:409px;font-size:11px;width:45px;text-align:center;color:#444746;" id="t97"><span>12</span></div><div class="a" style="left:0;top:425px;width:1286px;height:1px;background:#e2e2e2"></div><svg style="left:1121px;top:413px" width="8" height="4" viewBox="0 0 8 4"><path d="M0 0h8L4 4z" fill="#7f6000"/></svg><div class="a" style="left:46px;top:426px;width:1240px;height:20px;background:#fff"></div><div class="t" style="left:0px;top:430px;font-size:11px;width:45px;text-align:center;color:#444746;" id="t98"><span>13</span></div><div class="a" style="left:0;top:446px;width:1286px;height:1px;background:#e2e2e2"></div><svg style="left:1121px;top:434px" width="8" height="4" viewBox="0 0 8 4"><path d="M0 0h8L4 4z" fill="#757575"/></svg><div class="a" style="left:46px;top:447px;width:1240px;height:20px;background:#fefaef"></div><div class="t" style="left:0px;top:451px;font-size:11px;width:45px;text-align:center;color:#444746;" id="t99"><span>14</span></div><div class="a" style="left:0;top:467px;width:1286px;height:1px;background:#e2e2e2"></div><svg style="left:1121px;top:455px" width="8" height="4" viewBox="0 0 8 4"><path d="M0 0h8L4 4z" fill="#7f6000"/></svg><div class="a" style="left:46px;top:468px;width:1240px;height:20px;background:#fff"></div><div class="t" style="left:0px;top:472px;font-size:11px;width:45px;text-align:center;color:#444746;" id="t100"><span>15</span></div><div class="a" style="left:0;top:488px;width:1286px;height:1px;background:#e2e2e2"></div><svg style="left:1121px;top:476px" width="8" height="4" viewBox="0 0 8 4"><path d="M0 0h8L4 4z" fill="#757575"/></svg><div class="a" style="left:46px;top:489px;width:1240px;height:20px;background:#fefaef"></div><div class="t" style="left:0px;top:493px;font-size:11px;width:45px;text-align:center;color:#444746;" id="t101"><span>16</span></div><div class="a" style="left:0;top:509px;width:1286px;height:1px;background:#e2e2e2"></div><svg style="left:1121px;top:497px" width="8" height="4" viewBox="0 0 8 4"><path d="M0 0h8L4 4z" fill="#7f6000"/></svg><div class="a" style="left:46px;top:510px;width:1240px;height:20px;background:#fff"></div><div class="t" style="left:0px;top:514px;font-size:11px;width:45px;text-align:center;color:#444746;" id="t102"><span>17</span></div><div class="a" style="left:0;top:530px;width:1286px;height:1px;background:#e2e2e2"></div><svg style="left:1121px;top:518px" width="8" height="4" viewBox="0 0 8 4"><path d="M0 0h8L4 4z" fill="#757575"/></svg><div class="a" style="left:46px;top:531px;width:1240px;height:20px;background:#fefaef"></div><div class="t" style="left:0px;top:535px;font-size:11px;width:45px;text-align:center;color:#444746;" id="t103"><span>18</span></div><div class="a" style="left:0;top:551px;width:1286px;height:1px;background:#e2e2e2"></div><svg style="left:1121px;top:539px" width="8" height="4" viewBox="0 0 8 4"><path d="M0 0h8L4 4z" fill="#7f6000"/></svg><div class="a" style="left:46px;top:552px;width:1240px;height:20px;background:#fff"></div><div class="t" style="left:0px;top:556px;font-size:11px;width:45px;text-align:center;color:#444746;" id="t104"><span>19</span></div><div class="a" style="left:0;top:572px;width:1286px;height:1px;background:#e2e2e2"></div><svg style="left:1121px;top:560px" width="8" height="4" viewBox="0 0 8 4"><path d="M0 0h8L4 4z" fill="#757575"/></svg><div class="a" style="left:46px;top:573px;width:1240px;height:20px;background:#fefaef"></div><div class="t" style="left:0px;top:577px;font-size:11px;width:45px;text-align:center;color:#444746;" id="t105"><span>20</span></div><div class="a" style="left:0;top:593px;width:1286px;height:1px;background:#e2e2e2"></div><svg style="left:1121px;top:581px" width="8" height="4" viewBox="0 0 8 4"><path d="M0 0h8L4 4z" fill="#7f6000"/></svg><div class="a" style="left:46px;top:594px;width:1240px;height:20px;background:#fff"></div><div class="t" style="left:0px;top:598px;font-size:11px;width:45px;text-align:center;color:#444746;" id="t106"><span>21</span></div><div class="a" style="left:0;top:614px;width:1286px;height:1px;background:#e2e2e2"></div><svg style="left:1121px;top:602px" width="8" height="4" viewBox="0 0 8 4"><path d="M0 0h8L4 4z" fill="#757575"/></svg><div class="a" style="left:46px;top:615px;width:1240px;height:20px;background:#fefaef"></div><div class="t" style="left:0px;top:619px;font-size:11px;width:45px;text-align:center;color:#444746;" id="t107"><span>22</span></div><div class="a" style="left:0;top:635px;width:1286px;height:1px;background:#e2e2e2"></div><svg style="left:1121px;top:623px" width="8" height="4" viewBox="0 0 8 4"><path d="M0 0h8L4 4z" fill="#7f6000"/></svg><div class="a" style="left:46px;top:636px;width:1240px;height:20px;background:#fff"></div><div class="t" style="left:0px;top:640px;font-size:11px;width:45px;text-align:center;color:#444746;" id="t108"><span>23</span></div><div class="a" style="left:0;top:656px;width:1286px;height:1px;background:#e2e2e2"></div><svg style="left:1121px;top:644px" width="8" height="4" viewBox="0 0 8 4"><path d="M0 0h8L4 4z" fill="#757575"/></svg><div class="a" style="left:46px;top:657px;width:1240px;height:20px;background:#fefaef"></div><div class="t" style="left:0px;top:661px;font-size:11px;width:45px;text-align:center;color:#444746;" id="t109"><span>24</span></div><div class="a" style="left:0;top:677px;width:1286px;height:1px;background:#e2e2e2"></div><svg style="left:1121px;top:665px" width="8" height="4" viewBox="0 0 8 4"><path d="M0 0h8L4 4z" fill="#7f6000"/></svg><div class="a" style="left:46px;top:678px;width:1240px;height:20px;background:#fff"></div><div class="t" style="left:0px;top:682px;font-size:11px;width:45px;text-align:center;color:#444746;" id="t110"><span>25</span></div><div class="a" style="left:0;top:698px;width:1286px;height:1px;background:#e2e2e2"></div><svg style="left:1121px;top:686px" width="8" height="4" viewBox="0 0 8 4"><path d="M0 0h8L4 4z" fill="#757575"/></svg><div class="a" style="left:46px;top:699px;width:1240px;height:20px;background:#fefaef"></div><div class="t" style="left:0px;top:703px;font-size:11px;width:45px;text-align:center;color:#444746;" id="t111"><span>26</span></div><div class="a" style="left:0;top:719px;width:1286px;height:1px;background:#e2e2e2"></div><svg style="left:1121px;top:707px" width="8" height="4" viewBox="0 0 8 4"><path d="M0 0h8L4 4z" fill="#7f6000"/></svg><div class="a" style="left:46px;top:720px;width:1240px;height:20px;background:#fff"></div><div class="t" style="left:0px;top:724px;font-size:11px;width:45px;text-align:center;color:#444746;" id="t112"><span>27</span></div><div class="a" style="left:0;top:740px;width:1286px;height:1px;background:#e2e2e2"></div><svg style="left:1121px;top:728px" width="8" height="4" viewBox="0 0 8 4"><path d="M0 0h8L4 4z" fill="#757575"/></svg><div class="a" style="left:46px;top:741px;width:1240px;height:20px;background:#fefaef"></div><div class="t" style="left:0px;top:745px;font-size:11px;width:45px;text-align:center;color:#444746;" id="t113"><span>28</span></div><div class="a" style="left:0;top:761px;width:1286px;height:1px;background:#e2e2e2"></div><svg style="left:1121px;top:749px" width="8" height="4" viewBox="0 0 8 4"><path d="M0 0h8L4 4z" fill="#7f6000"/></svg><div class="a" style="left:46px;top:762px;width:1240px;height:20px;background:#fff"></div><div class="t" style="left:0px;top:766px;font-size:11px;width:45px;text-align:center;color:#444746;" id="t114"><span>29</span></div><div class="a" style="left:0;top:782px;width:1286px;height:1px;background:#e2e2e2"></div><svg style="left:1121px;top:770px" width="8" height="4" viewBox="0 0 8 4"><path d="M0 0h8L4 4z" fill="#757575"/></svg><div class="a" style="left:46px;top:783px;width:1240px;height:20px;background:#fefaef"></div><div class="t" style="left:0px;top:787px;font-size:11px;width:45px;text-align:center;color:#444746;" id="t115"><span>30</span></div><div class="a" style="left:0;top:803px;width:1286px;height:1px;background:#e2e2e2"></div><svg style="left:1121px;top:791px" width="8" height="4" viewBox="0 0 8 4"><path d="M0 0h8L4 4z" fill="#7f6000"/></svg><div class="a" style="left:46px;top:804px;width:1240px;height:20px;background:#fff"></div><div class="t" style="left:0px;top:808px;font-size:11px;width:45px;text-align:center;color:#444746;" id="t116"><span>31</span></div><div class="a" style="left:0;top:824px;width:1286px;height:1px;background:#e2e2e2"></div><svg style="left:1121px;top:812px" width="8" height="4" viewBox="0 0 8 4"><path d="M0 0h8L4 4z" fill="#757575"/></svg><div class="a" style="left:46px;top:825px;width:1240px;height:20px;background:#fefaef"></div><div class="t" style="left:0px;top:829px;font-size:11px;width:45px;text-align:center;color:#444746;" id="t117"><span>32</span></div><div class="a" style="left:0;top:845px;width:1286px;height:1px;background:#e2e2e2"></div><svg style="left:1121px;top:833px" width="8" height="4" viewBox="0 0 8 4"><path d="M0 0h8L4 4z" fill="#7f6000"/></svg><div class="a" style="left:45px;top:166px;width:1px;height:680px;background:#c7c7c7"></div><div class="a" style="left:110px;top:166px;width:1px;height:25px;background:repeating-linear-gradient(180deg,rgba(184,184,184,.5) 0 1px,transparent 1px 2px)"></div><div class="a" style="left:110px;top:195px;width:1px;height:105px;background:repeating-linear-gradient(180deg,#d5d5d5 0 1px,transparent 1px 2px)"></div><div class="a" style="left:110px;top:300px;width:1px;height:546px;background:#e2e2e2"></div><div class="a" style="left:331px;top:166px;width:1px;height:25px;background:repeating-linear-gradient(180deg,rgba(184,184,184,.5) 0 1px,transparent 1px 2px)"></div><div class="a" style="left:331px;top:195px;width:1px;height:105px;background:repeating-linear-gradient(180deg,#d5d5d5 0 1px,transparent 1px 2px)"></div><div class="a" style="left:331px;top:300px;width:1px;height:546px;background:#e2e2e2"></div><div class="a" style="left:512px;top:166px;width:1px;height:25px;background:repeating-linear-gradient(180deg,rgba(184,184,184,.5) 0 1px,transparent 1px 2px)"></div><div class="a" style="left:512px;top:195px;width:1px;height:105px;background:repeating-linear-gradient(180deg,#d5d5d5 0 1px,transparent 1px 2px)"></div><div class="a" style="left:512px;top:300px;width:1px;height:546px;background:#e2e2e2"></div><div class="a" style="left:663px;top:166px;width:1px;height:25px;background:repeating-linear-gradient(180deg,rgba(184,184,184,.5) 0 1px,transparent 1px 2px)"></div><div class="a" style="left:663px;top:195px;width:1px;height:105px;background:repeating-linear-gradient(180deg,#d5d5d5 0 1px,transparent 1px 2px)"></div><div class="a" style="left:663px;top:300px;width:1px;height:546px;background:#e2e2e2"></div><div class="a" style="left:784px;top:166px;width:1px;height:25px;background:repeating-linear-gradient(180deg,rgba(184,184,184,.5) 0 1px,transparent 1px 2px)"></div><div class="a" style="left:784px;top:195px;width:1px;height:105px;background:repeating-linear-gradient(180deg,#d5d5d5 0 1px,transparent 1px 2px)"></div><div class="a" style="left:784px;top:300px;width:1px;height:546px;background:#e2e2e2"></div><div class="a" style="left:885px;top:166px;width:1px;height:25px;background:repeating-linear-gradient(180deg,rgba(184,184,184,.5) 0 1px,transparent 1px 2px)"></div><div class="a" style="left:885px;top:195px;width:1px;height:105px;background:repeating-linear-gradient(180deg,#d5d5d5 0 1px,transparent 1px 2px)"></div><div class="a" style="left:885px;top:300px;width:1px;height:546px;background:#e2e2e2"></div><div class="a" style="left:986px;top:166px;width:1px;height:25px;background:repeating-linear-gradient(180deg,rgba(184,184,184,.5) 0 1px,transparent 1px 2px)"></div><div class="a" style="left:986px;top:195px;width:1px;height:105px;background:repeating-linear-gradient(180deg,#d5d5d5 0 1px,transparent 1px 2px)"></div><div class="a" style="left:986px;top:300px;width:1px;height:546px;background:#e2e2e2"></div><div class="a" style="left:1135px;top:166px;width:1px;height:25px;background:repeating-linear-gradient(180deg,rgba(184,184,184,.5) 0 1px,transparent 1px 2px)"></div><div class="a" style="left:1135px;top:195px;width:1px;height:105px;background:repeating-linear-gradient(180deg,#d5d5d5 0 1px,transparent 1px 2px)"></div><div class="a" style="left:1135px;top:300px;width:1px;height:546px;background:#e2e2e2"></div><div class="a" style="left:1286px;top:166px;width:1px;height:25px;background:repeating-linear-gradient(180deg,rgba(184,184,184,.5) 0 1px,transparent 1px 2px)"></div><div class="a" style="left:1286px;top:195px;width:1px;height:105px;background:repeating-linear-gradient(180deg,#d5d5d5 0 1px,transparent 1px 2px)"></div><div class="a" style="left:1286px;top:300px;width:1px;height:546px;background:#e2e2e2"></div><div class="a" style="left:0;top:845px;width:1384px;height:1px;background:#c7c7c7"></div><div class="a" style="left:46px;top:165px;width:65px;height:26px;border:2px solid #3b63a8;"></div><div class="a" style="left:48px;top:167px;width:61px;height:22px;border:1px solid #e8f0fe;"></div><div class="a" style="left:0;top:864px;width:1400px;height:36px;background:#f9fbfd"></div><div class="a" style="left:57px;top:882px;width:10px;height:2px;background:#444746"></div><div class="a" style="left:61px;top:878px;width:2px;height:10px;background:#444746"></div><div class="a" style="left:95px;top:878px;width:14px;height:2px;background:#444746"></div><div class="a" style="left:95px;top:882px;width:14px;height:2px;background:#444746"></div><div class="a" style="left:95px;top:886px;width:14px;height:2px;background:#444746"></div><div class="a" style="left:135px;top:897px;width:130px;height:3px;background:#a142f4"></div><svg style="left:149px;top:877px" width="13" height="16" viewBox="0 0 13 16"><path d="M3 6.5V4.5a3.5 3.5 0 0 1 7 0v2" fill="none" stroke="#444746" stroke-width="2"/><rect x="0.5" y="6.5" width="12" height="9" rx="1.5" fill="#444746"/><circle cx="6.5" cy="11" r="1.4" fill="#f9fbfd"/></svg><div class="t" style="left:168px;top:877px;font-size:14px;color:#444746;transform-origin:0.00px 50%;transform:translateX(-0.40px) scaleX(1.0548);" id="t118"><span>4-ภาพรวม</span></div><svg style="left:245px;top:881px" width="8" height="4" viewBox="0 0 8 4"><path d="M0 0h8L4 4z" fill="#444746"/></svg><div class="a" style="left:266px;top:897px;width:113px;height:3px;background:#f9ab00"></div><svg style="left:280px;top:877px" width="13" height="16" viewBox="0 0 13 16"><path d="M3 6.5V4.5a3.5 3.5 0 0 1 7 0v2" fill="none" stroke="#444746" stroke-width="2"/><rect x="0.5" y="6.5" width="12" height="9" rx="1.5" fill="#444746"/><circle cx="6.5" cy="11" r="1.4" fill="#f9fbfd"/></svg><div class="t" style="left:299px;top:877px;font-size:14px;color:#444746;transform-origin:0.00px 50%;transform:translateX(0.70px) scaleX(1.0933);" id="t119"><span>0-วิธีใช้</span></div><svg style="left:359px;top:881px" width="8" height="4" viewBox="0 0 8 4"><path d="M0 0h8L4 4z" fill="#444746"/></svg><div class="a" style="left:379px;top:864px;width:146px;height:36px;background:#dce3eb"></div><div class="a" style="left:379px;top:897px;width:146px;height:3px;background:#1ea446"></div><div class="t" style="left:391px;top:877px;font-size:14px;color:#0b57d0;transform-origin:1.00px 50%;transform:translateX(-1.00px) scaleX(1.0000);" id="t120"><span>1-ข้อมูลโครงการ</span></div><svg style="left:505px;top:881px" width="8" height="4" viewBox="0 0 8 4"><path d="M0 0h8L4 4z" fill="#0b57d0"/></svg><div class="a" style="left:525px;top:897px;width:99px;height:3px;background:#4285f4"></div><div class="t" style="left:537px;top:877px;font-size:14px;color:#444746;transform-origin:1.00px 50%;transform:translateX(-1.00px) scaleX(1.0529);" id="t121"><span>2-รายรับ</span></div><svg style="left:604px;top:881px" width="8" height="4" viewBox="0 0 8 4"><path d="M0 0h8L4 4z" fill="#444746"/></svg><div class="a" style="left:624px;top:897px;width:107px;height:3px;background:#ea4335"></div><div class="t" style="left:636px;top:877px;font-size:14px;color:#444746;transform-origin:1.00px 50%;transform:translateX(-0.60px) scaleX(1.0569);" id="t122"><span>3-รายจ่าย</span></div><svg style="left:710px;top:881px" width="8" height="4" viewBox="0 0 8 4"><path d="M0 0h8L4 4z" fill="#444746"/></svg><div class="a" style="left:731px;top:897px;width:161px;height:3px;background:#1a9fe0"></div><svg style="left:745px;top:877px" width="13" height="16" viewBox="0 0 13 16"><path d="M3 6.5V4.5a3.5 3.5 0 0 1 7 0v2" fill="none" stroke="#444746" stroke-width="2"/><rect x="0.5" y="6.5" width="12" height="9" rx="1.5" fill="#444746"/><circle cx="6.5" cy="11" r="1.4" fill="#f9fbfd"/></svg><div class="t" style="left:764px;top:877px;font-size:14px;color:#444746;transform-origin:1.00px 50%;transform:translateX(-0.60px) scaleX(1.0105);" id="t123"><span>5-เจาะโครงการ</span></div><svg style="left:872px;top:881px" width="8" height="4" viewBox="0 0 8 4"><path d="M0 0h8L4 4z" fill="#444746"/></svg><div class="a" style="left:892px;top:897px;width:160px;height:3px;background:#12a38d"></div><svg style="left:906px;top:877px" width="13" height="16" viewBox="0 0 13 16"><path d="M3 6.5V4.5a3.5 3.5 0 0 1 7 0v2" fill="none" stroke="#444746" stroke-width="2"/><rect x="0.5" y="6.5" width="12" height="9" rx="1.5" fill="#444746"/><circle cx="6.5" cy="11" r="1.4" fill="#f9fbfd"/></svg><div class="t" style="left:925px;top:877px;font-size:14px;color:#444746;transform-origin:1.00px 50%;transform:translateX(-0.10px) scaleX(1.0033);" id="t124"><span>6-กระแสเงินสด</span></div><svg style="left:1031px;top:881px" width="8" height="4" viewBox="0 0 8 4"><path d="M0 0h8L4 4z" fill="#444746"/></svg><div class="a" style="left:1052px;top:897px;width:115px;height:3px;background:#fa7b17"></div><svg style="left:1066px;top:877px" width="13" height="16" viewBox="0 0 13 16"><path d="M3 6.5V4.5a3.5 3.5 0 0 1 7 0v2" fill="none" stroke="#444746" stroke-width="2"/><rect x="0.5" y="6.5" width="12" height="9" rx="1.5" fill="#444746"/><circle cx="6.5" cy="11" r="1.4" fill="#f9fbfd"/></svg><div class="t" style="left:1085px;top:877px;font-size:14px;color:#444746;transform-origin:1.00px 50%;transform:translateX(-1.00px) scaleX(1.1375);" id="t125"><span>7-เปรียบเทียบ</span></div><div class="a" style="left:1168px;top:876px;width:1px;height:18px;background:#c7c7c7"></div><div class="a" style="left:1169px;top:864px;width:231px;height:36px;background:#f9fbfd"></div><svg style="left:1187px;top:877px" width="8" height="12" viewBox="0 0 8 12"><path d="M6.5 1L1.5 6l5 5" fill="none" stroke="#c4c7c5" stroke-width="1.6"/></svg><svg style="left:1227px;top:877px" width="8" height="12" viewBox="0 0 8 12"><path d="M1.5 1l5 5-5 5" fill="none" stroke="#444746" stroke-width="1.6"/></svg><svg style="left:1368px;top:877px" width="8" height="12" viewBox="0 0 8 12"><path d="M6.5 1L1.5 6l5 5" fill="none" stroke="#444746" stroke-width="1.6"/></svg></div></body></html>
